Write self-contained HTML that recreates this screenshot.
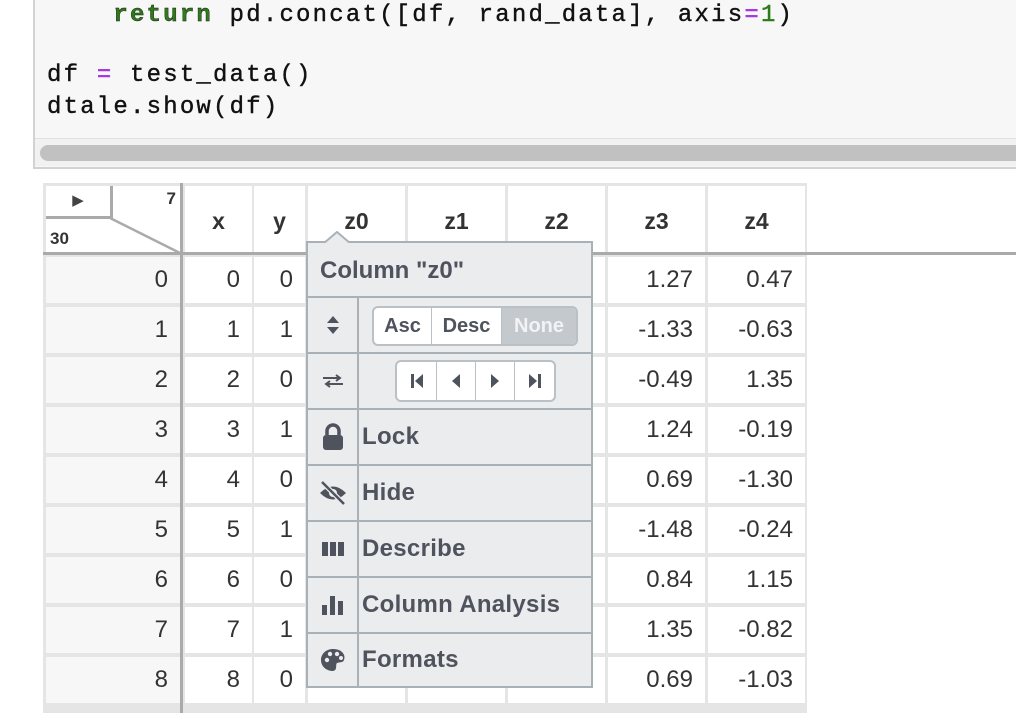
<!DOCTYPE html>
<html><head><style>
body{margin:0;width:1016px;height:710px;overflow:hidden;background:#fff;position:relative;font-family:"Liberation Sans",sans-serif}
.code{position:absolute;left:33px;top:-2px;width:990px;height:171px;background:#f7f7f7;border:2px solid #d2d2d2;border-top:none;box-sizing:border-box}
.ln{position:absolute;left:12px;font-family:"Liberation Mono",monospace;font-size:24px;letter-spacing:2.2px;color:#111;white-space:pre;-webkit-text-stroke:0.4px #111}
.kw{color:#2f7a1a;font-weight:bold}.op{color:#a43be0;-webkit-text-stroke:0.4px #a43be0}.num{color:#2f7a1a;-webkit-text-stroke:0.4px #2f7a1a}
.sb{position:absolute;left:5px;top:147px;width:1000px;height:16px;background:#c1c1c1;border-radius:8px}
.sbt{position:absolute;left:0;top:140px;width:990px;height:27px;background:#f1f1f1;border-top:1px solid #e0e0e0}
.c{position:absolute;box-sizing:border-box;font-size:24px;color:#333;text-align:right;padding-right:12px}
.h{position:absolute;box-sizing:border-box;font-size:23px;color:#333;font-weight:bold;text-align:center;background:#fff}
.pop{position:absolute;left:306px;top:241px;width:287px;height:447px;background:#ebecee;border:2px solid #a9b1b8;box-sizing:border-box;color:#4f535e;font-weight:bold}
.r{position:absolute;left:0;width:283px;border-top:2px solid #a9b1b8;box-sizing:border-box}
.ic{position:absolute;left:0;top:0;width:49px;height:100%;border-right:2px solid #a9b1b8;display:flex;align-items:center;justify-content:center}
.lb{position:absolute;left:54px;font-size:24px;top:50%;transform:translateY(-50%);letter-spacing:0.3px}
.btn{position:absolute;background:#fff;border:2px solid #b9c0c6;border-radius:6px;display:flex;overflow:hidden;box-sizing:border-box}
.btn span{display:flex;align-items:center;justify-content:center;border-right:1px solid #b9c0c6;font-size:20px}
</style></head><body>
<div class="code">
<div class="ln" style="top:4px"><span style="visibility:hidden">    </span><span class="kw">return</span> pd.concat([df, rand_data], axis<span class="op">=</span><span class="num">1</span>)</div>
<div class="ln" style="top:64px">df <span class="op">=</span> test_data()</div>
<div class="ln" style="top:96px">dtale.show(df)</div>
<div class="sbt"></div>
<div class="sb"></div>
</div>

<div style="position:absolute;left:43px;top:183px;width:764px;height:530px;background:#e5e5e5"></div>
<div style="position:absolute;left:806px;top:252px;width:210px;height:3px;background:#aaa"></div>
<div id="g"></div>
<script>
var g=document.getElementById('g'),h='';
var cols=[[185,252,'x'],[254,305,'y'],[308,405,'z0'],[408,505,'z1'],[508,605,'z2'],[608,705,'z3'],[708,805,'z4']];
h+='<div style="position:absolute;left:46px;top:186px;width:134px;height:66px;background:#fff"></div>';
h+='<div style="position:absolute;left:46px;top:186px;width:64px;height:30px;background:#fff;border-right:3px solid #aaa;border-bottom:3px solid #aaa;box-sizing:content-box;font-size:15px;color:#444;text-align:center;line-height:30px">&#9654;</div>';
h+='<svg style="position:absolute;left:110px;top:216px" width="72" height="40"><line x1="0" y1="2" x2="72" y2="38" stroke="#aaa" stroke-width="2.5"/></svg>';
h+='<div style="position:absolute;left:150px;top:189px;width:26px;text-align:right;font-size:17px;font-weight:bold;color:#333">7</div>';
h+='<div style="position:absolute;left:50px;top:229px;font-size:17px;font-weight:bold;color:#333">30</div>';
cols.forEach(function(c){h+='<div class="h" style="left:'+c[0]+'px;top:186px;width:'+(c[1]-c[0])+'px;height:66px;line-height:70px">'+c[2]+'</div>';});
h+='<div style="position:absolute;left:43px;top:252px;width:764px;height:3px;background:#aaa"></div>';
h+='<div style="position:absolute;left:180px;top:183px;width:3px;height:530px;background:#aaa"></div>';
var z3=['1.27','-1.33','-0.49','1.24','0.69','-1.48','0.84','1.35','0.69'];
var z4=['0.47','-0.63','1.35','-0.19','-1.30','-0.24','1.15','-0.82','-1.03'];
var y01=['0','1','0','1','0','1','0','1','0'];
for(var i=0;i<9;i++){var t=257+i*50;
h+='<div class="c" style="left:46px;top:'+t+'px;width:134px;height:46px;line-height:46px;background:#f7f7f7">'+i+'</div>';
var v=[i,y01[i],'0.57','0.57','0.57',z3[i],z4[i]];
cols.forEach(function(c,j){h+='<div class="c" style="left:'+c[0]+'px;top:'+t+'px;width:'+(c[1]-c[0])+'px;height:46px;line-height:46px;background:#fff">'+v[j]+'</div>';});
}
g.innerHTML=h;
</script>

<div class="pop">
<svg style="position:absolute;left:16px;top:-12px" width="26" height="12"><path d="M0 12 L13 1 L26 12" fill="#ebecee" stroke="#a9b1b8" stroke-width="2"/></svg>
<div style="position:absolute;left:12px;top:14px;font-size:24px">Column "z0"</div>
<div class="r" style="top:53px;height:56px"><div class="ic"><svg width="14" height="20"><path d="M7 1 L13 8 H1Z M7 19 L13 12 H1Z" fill="#4f535e"/></svg></div>
<div class="btn" style="left:64px;top:8px;width:206px;height:40px"><span style="width:57px">Asc</span><span style="width:69px">Desc</span><span style="flex:1;background:#c4c9cd;color:#f2f3f4;border:none">None</span></div></div>
<div class="r" style="top:109px;height:56px"><div class="ic"><svg width="24" height="16"><path d="M2 5 H18 M15 2 L19 5 L15 8 M22 11 H6 M9 8 L5 11 L9 14" stroke="#4f535e" stroke-width="2" fill="none"/></svg></div>
<div class="btn" style="left:87px;top:6px;width:161px;height:42px"><span style="width:39px"><svg width="14" height="18"><rect x="1" y="2" width="3" height="14" fill="#4f535e"/><path d="M13 2 L5 9 L13 16Z" fill="#4f535e"/></svg></span><span style="width:38px"><svg width="10" height="18"><path d="M9 2 L1 9 L9 16Z" fill="#4f535e"/></svg></span><span style="width:38px"><svg width="10" height="18"><path d="M1 2 L9 9 L1 16Z" fill="#4f535e"/></svg></span><span style="flex:1;border:none"><svg width="14" height="18"><path d="M1 2 L9 9 L1 16Z" fill="#4f535e"/><rect x="10" y="2" width="3" height="14" fill="#4f535e"/></svg></span></div></div>
<div class="r" style="top:165px;height:56px"><div class="ic"><svg width="24" height="28"><path d="M6 12 V8 A6 6 0 0 1 18 8 V12" stroke="#4f535e" stroke-width="3.5" fill="none"/><rect x="2" y="12" width="20" height="15" rx="3" fill="#4f535e"/></svg></div><div class="lb">Lock</div></div>
<div class="r" style="top:221px;height:56px"><div class="ic"><svg width="30" height="26"><path d="M2 13 Q15 0 28 13 Q15 26 2 13Z" fill="#4f535e"/><circle cx="15" cy="13" r="4" fill="#ebecee"/><line x1="4" y1="2" x2="26" y2="24" stroke="#ebecee" stroke-width="5"/><line x1="4" y1="2" x2="26" y2="24" stroke="#4f535e" stroke-width="2.5"/></svg></div><div class="lb">Hide</div></div>
<div class="r" style="top:277px;height:56px"><div class="ic"><svg width="24" height="16"><rect x="1" y="1" width="6" height="14" fill="#4f535e"/><rect x="9" y="1" width="6" height="14" fill="#4f535e"/><rect x="17" y="1" width="6" height="14" fill="#4f535e"/></svg></div><div class="lb">Describe</div></div>
<div class="r" style="top:333px;height:56px"><div class="ic"><svg width="24" height="20"><rect x="1" y="10" width="5" height="10" fill="#4f535e"/><rect x="9" y="1" width="5" height="19" fill="#4f535e"/><rect x="17" y="6" width="5" height="14" fill="#4f535e"/></svg></div><div class="lb">Column Analysis</div></div>
<div class="r" style="top:389px;height:54px"><div class="ic"><svg width="26" height="24"><path d="M13 1 C22 1 26 7 24 12 C23 15 19 14 17 15 C15 17 18 22 13 23 C6 23 1 18 1 12 C1 6 6 1 13 1Z" fill="#4f535e"/><circle cx="7" cy="12" r="2.2" fill="#ebecee"/><circle cx="10" cy="6" r="2.2" fill="#ebecee"/><circle cx="17" cy="6" r="2.2" fill="#ebecee"/><circle cx="21" cy="10" r="2" fill="#ebecee"/></svg></div><div class="lb">Formats</div></div>
</div>
</body></html>
